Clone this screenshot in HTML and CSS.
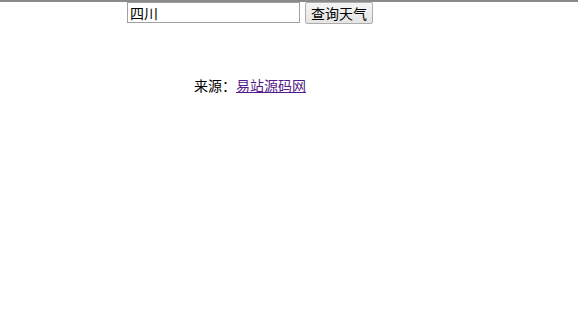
FILE: index.html
```html
<!DOCTYPE html>
<html lang="zh-CN">
<head>
    <meta charset="UTF-8">
    <title>天气查询</title>
    <link rel="stylesheet" href="styles.css">
</head>
<body>
    <div class="wrap">
        <div class="search">
            <input type="text" class="city" value="四川">
            <button class="query">查询天气</button>
        </div>
        <p class="source">来源：<a href="#">易站源码网</a></p>
    </div>
</body>
</html>
```

FILE: styles.css
```css
* {
    box-sizing: border-box;
}

body {
    margin: 0;
    border-top: 2px solid #8a8a8a;
    font-family: "Noto Sans CJK SC", "Microsoft YaHei", sans-serif;
    font-size: 14px;
    color: #000;
    background: #fff;
}

.wrap {
    width: 500px;
}

.search {
    display: flex;
    justify-content: center;
    align-items: flex-start;
    gap: 5px;
}

.city {
    width: 173px;
    height: 21px;
    padding: 0 2px;
    border: 1px solid #a0a0a0;
    font-family: inherit;
    font-size: 14px;
    line-height: 19px;
}

.query {
    width: 68px;
    height: 22px;
    padding: 0;
    border: 1px solid #adadad;
    border-radius: 2px;
    background: linear-gradient(#f6f6f6, #e4e4e4);
    font-family: inherit;
    font-size: 14px;
    line-height: 20px;
    color: #000;
}

.source {
    margin: 51px 0 0;
    text-align: center;
    line-height: 20px;
}

.source a {
    color: #551a8b;
}
```
